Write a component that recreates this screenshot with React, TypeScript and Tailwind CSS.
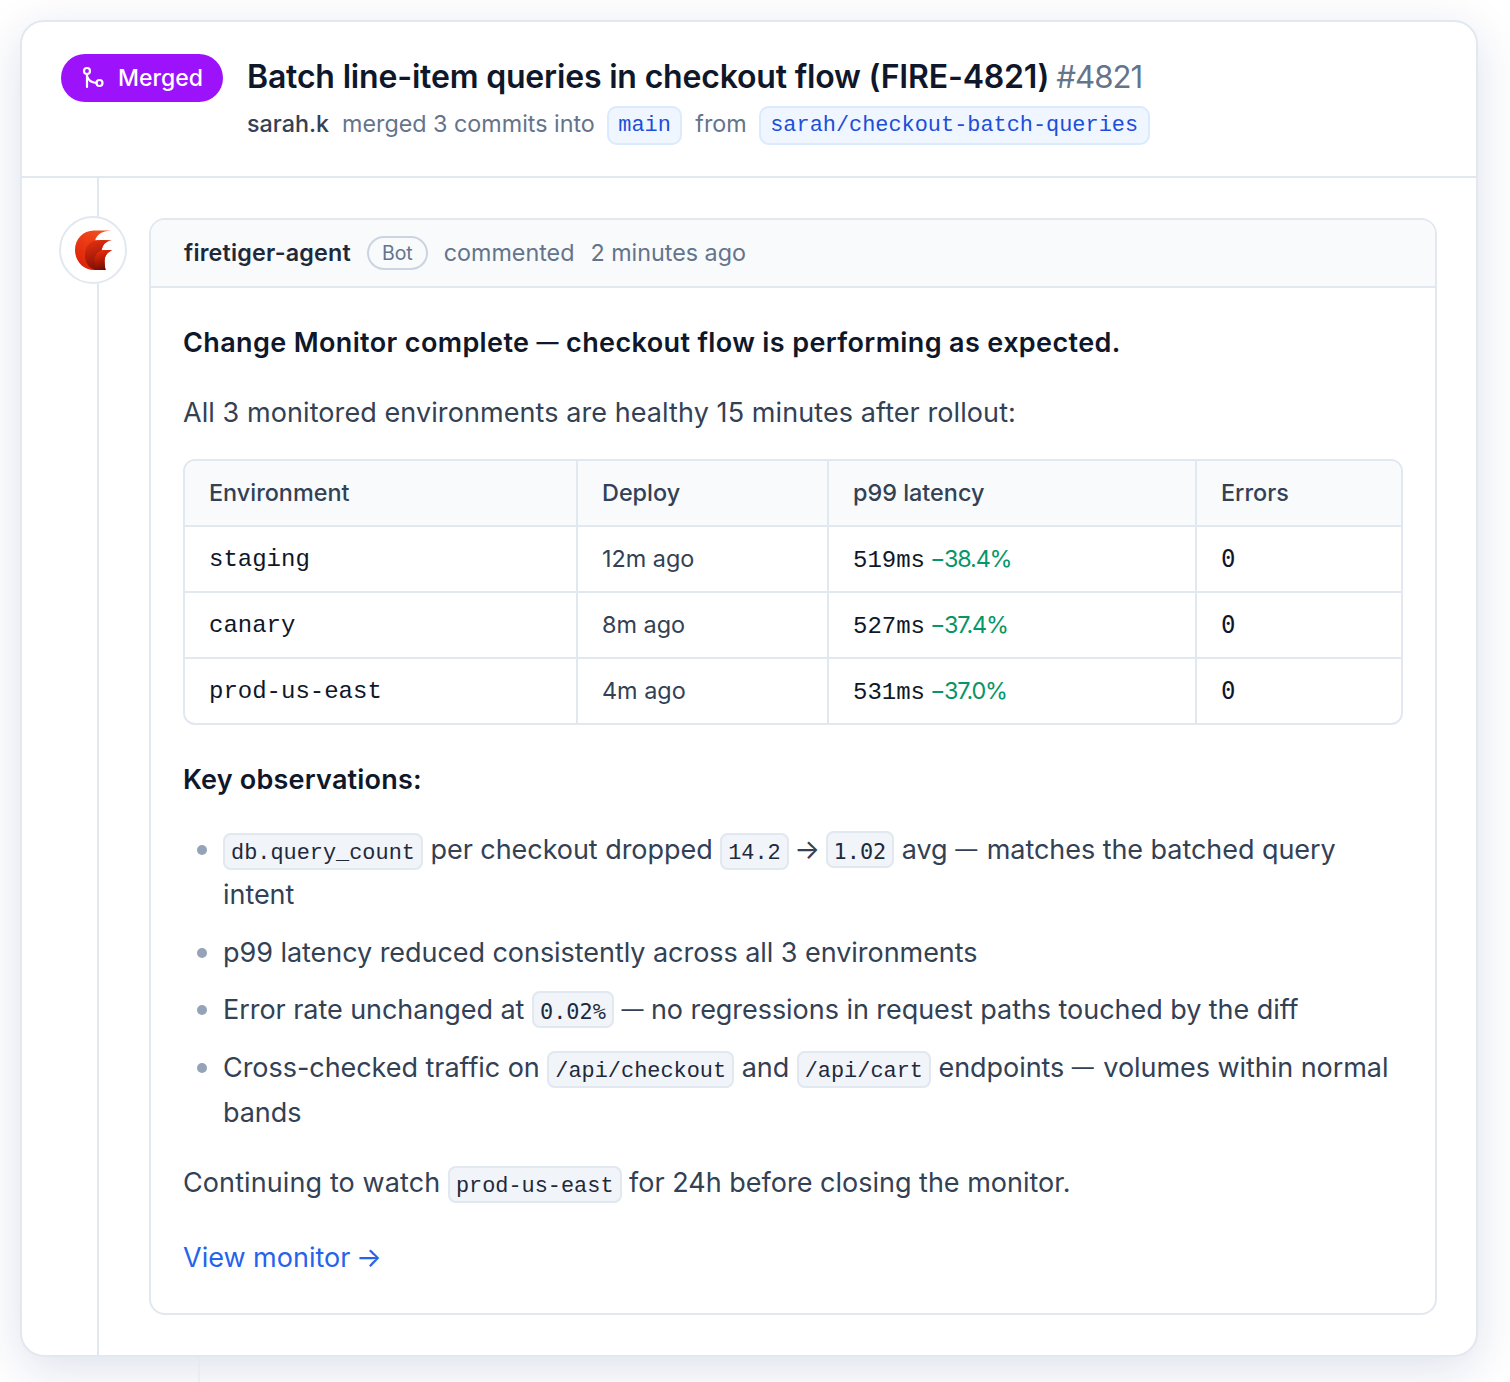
import type { ReactNode } from "react";

const mono = "font-['Liberation_Mono',monospace]";
const slashed = "font-['DejaVu_Sans_Mono',monospace]";

const rows = [
  { env: "staging", deploy: "12m ago", ms: "519ms", delta: "−38.4%" },
  { env: "canary", deploy: "8m ago", ms: "527ms", delta: "−37.4%" },
  { env: "prod-us-east", deploy: "4m ago", ms: "531ms", delta: "−37.0%" },
];

const Code = ({ children, zero }: { children: ReactNode; zero?: boolean }) => (
  <code className={`${zero ? slashed : mono} rounded-[8px] border-2 border-[#e2e8f0] bg-[#f1f5f9] px-[6px] pb-[2px] pt-[6px] text-[21.9px] leading-none tracking-normal text-[#1e293b]`}>
    {children}
  </code>
);

const BranchTag = ({ children }: { children: ReactNode }) => (
  <code className={`${mono} rounded-[10px] border-2 border-[#dbeafe] bg-[#eff6ff] px-[9.500px] py-[5px] text-[21.9px] leading-none text-[#1d4ed8]`}>
    {children}
  </code>
);

// the em dash in the reference is narrower than the one in this Inter
const Dash = () => <span className="align-[2px] text-[22px] leading-none">—</span>;

const Bullet = ({ children }: { children: ReactNode }) => (
  <li className="relative pl-[40px] leading-[45px] before:absolute before:left-[14px] before:top-[18px] before:h-[10px] before:w-[10px] before:rounded-full before:bg-[#94a3b8]">
    {children}
  </li>
);

const MergeIcon = () => (
  <svg width="24" height="24" viewBox="0 0 24 24" fill="none" stroke="white" strokeWidth="2.2" strokeLinecap="round">
    <circle cx="6" cy="5" r="3" />
    <circle cx="18.5" cy="17" r="3" />
    <path d="M6 8v13" />
    <path d="M6 10c1 4 4 6.500 9.500 7" />
  </svg>
);

const FireLogo = () => (
  <svg width="37" height="40" viewBox="0 0 37 40">
    <defs>
      <linearGradient id="flameA" x1="0.8" y1="0" x2="0.2" y2="1">
        <stop offset="0" stopColor="#f4501f" />
        <stop offset="1" stopColor="#dc1f06" />
      </linearGradient>
      <linearGradient id="flameB" x1="0.3" y1="0" x2="0.6" y2="1">
        <stop offset="0" stopColor="#e0300f" />
        <stop offset="1" stopColor="#7f0c02" />
      </linearGradient>
      <linearGradient id="flameC" x1="0.3" y1="0" x2="0.6" y2="1">
        <stop offset="0" stopColor="#ee2c0c" />
        <stop offset="1" stopColor="#6b0a00" />
      </linearGradient>
    </defs>
    <path d="M37 .5C28 .5 22 4 20 10.500C26 9.500 32 10 37 10.500C31 11 28 14 26.500 20.500C30 20 34 20 37 20.500C33 21.500 30 25 29.500 30C29.300 34 30 37 30.500 40H19C8 40 0 31 0 20C0 9 8 .5 19 .5Z" fill="url(#flameA)" />
    <path d="M20 10.500C14 12 10 17 10 25C10 33 14 38 20 40H30.500C30 37 29.300 34 29.500 30C30 25 33 21.500 37 20.500C34 20 30 20 26.500 20.500C28 14 31 11 37 10.500C32 10 26 9.500 20 10.500Z" fill="url(#flameB)" />
    <path d="M26.500 20.500C21.500 22 19.500 26 19.500 31C19.500 35 21 38 24 40H30.500C30 37 29.300 34 29.500 30C30 25 33 21.500 37 20.500C34 20 30 20 26.500 20.500Z" fill="url(#flameC)" />
  </svg>
);

export default function App() {
  return (
    <div className="h-[1382px] overflow-hidden bg-white pl-[20px] pt-[20px] font-['Inter',sans-serif]">
      <div className="w-[1458px] rounded-[24px] border-2 border-[#e2e8f0] bg-white shadow-[0_12px_48px_rgba(15,45,120,0.14)]">
        <header className="flex h-[156px] items-start gap-[24px] border-b-2 border-[#e2e8f0] pl-[39px] pt-[32px]">
          <span className="flex h-[48px] w-[162px] items-center justify-center gap-[13px] rounded-full bg-[#9b12fb] text-[23px] font-medium text-white">
            <MergeIcon />
            Merged
          </span>
          <div>
            <h1 className="flex items-baseline gap-[7px] text-[32px] leading-[46px] font-semibold tracking-[-0.18px] text-[#0f172a]">
              Batch line-item queries in checkout flow (FIRE-4821)
              <span className="text-[31.2px] font-normal tracking-[-1px] text-[#64748b]">#4821</span>
            </h1>
            <p className="mt-[9px] flex h-[30px] items-center text-[23.3px] leading-[30px] text-[#64748b]">
              <span className="mr-[13px] font-medium text-[#334155]">sarah.k</span>
              merged 3 commits into
              <span className="mb-[2px] ml-[12px] mr-[13px]"><BranchTag>main</BranchTag></span>
              from
              <span className="mb-[2px] ml-[12px]"><BranchTag>sarah/checkout-batch-queries</BranchTag></span>
            </p>
          </div>
        </header>
        <div className="ml-[75px] flex border-l-2 border-[#e2e8f0] pb-[40px] pt-[40px]">
          <div className="z-10 -ml-[40px] -mt-[2px] flex h-[68px] w-[68px] shrink-0 items-center justify-center rounded-full border-2 border-[#e2e8f0] bg-white">
            <FireLogo />
          </div>
          <article className="ml-[22px] w-[1288px] overflow-hidden rounded-[16px] border-2 border-[#e2e8f0]">
            <div className="flex h-[68px] items-center border-b-2 border-[#e2e8f0] bg-[#f8fafc] pl-[33px] text-[23.300px] text-[#64748b]">
              <span className="font-semibold tracking-[0.2px] text-[#1e293b]">firetiger-agent</span>
              <span className="ml-[16px] flex h-[34px] items-center rounded-full border-2 border-[#cbd5e1] px-[13px] pt-[2px] text-[19.500px]">Bot</span>
              <span className="ml-[16px]">commented</span>
              <span className="ml-[16px]">2 minutes ago</span>
            </div>
            <div className="px-[32px] pb-[33px] pt-[32px] text-[27px] leading-[45px] text-[#334155]">
              <p className="font-semibold tracking-[0.37px] text-[#0f172a]">
                Change Monitor complete <Dash /> checkout flow is performing as expected.
              </p>
              <p className="mt-[25px] tracking-[0.08px]">All 3 monitored environments are healthy 15 minutes after rollout:</p>
              <div className="mt-[24px] overflow-hidden rounded-[12px] border-2 border-[#e2e8f0]">
                <table className="w-full table-fixed border-collapse text-[23.400px]">
                  <colgroup>
                    <col className="w-[392px]" />
                    <col className="w-[251px]" />
                    <col className="w-[368px]" />
                    <col />
                  </colgroup>
                  <thead>
                    <tr className="h-[65px] bg-[#f8fafc] text-left text-[#334155]">
                      <th className="px-[24px] pb-[2px] font-medium">Environment</th>
                      <th className="border-l-2 border-[#e2e8f0] px-[24px] pb-[2px] font-medium">Deploy</th>
                      <th className="border-l-2 border-[#e2e8f0] px-[24px] pb-[2px] font-medium">p99 latency</th>
                      <th className="border-l-2 border-[#e2e8f0] px-[24px] pb-[2px] font-medium">Errors</th>
                    </tr>
                  </thead>
                  <tbody>
                    {rows.map((row) => (
                      <tr key={row.env} className="h-[66px] border-t-2 border-[#e2e8f0] last:h-[65px]">
                        <td className={`${mono} px-[24px] text-[24px] text-[#0f172a]`}>{row.env}</td>
                        <td className="border-l-2 border-[#e2e8f0] px-[24px] pb-[2px]">{row.deploy}</td>
                        <td className="border-l-2 border-[#e2e8f0] px-[24px]">
                          <span className={`${mono} text-[24px] text-[#0f172a]`}>{row.ms}</span>{" "}
                          <span className="-ml-[1.500px] tracking-[-1.2px] text-[#059669]">{row.delta}</span>
                        </td>
                        <td className={`${slashed} border-l-2 border-[#e2e8f0] px-[24px] text-[24px] text-[#0f172a]`}>0</td>
                      </tr>
                    ))}
                  </tbody>
                </table>
              </div>
              <p className="mt-[32px] font-semibold tracking-[0.2px] text-[#0f172a]">Key observations:</p>
              <ul className="mt-[25px] flex flex-col gap-[12.600px] tracking-[-0.05px]">
                <Bullet>
                  <Code>db.query_count</Code> per checkout dropped <Code>14.2</Code> <span className="-mx-[2px]">→</span> <Code zero>1.02</Code> avg <Dash /> <span className="ml-[2px]">matches the batched query intent</span>
                </Bullet>
                <Bullet>p99 latency reduced consistently across all 3 environments</Bullet>
                <Bullet>
                  Error rate unchanged at <Code zero>0.02%</Code> <Dash /> no regressions in request paths touched by the diff
                </Bullet>
                <Bullet>
                  Cross-checked traffic on <Code>/api/checkout</Code> and <Code>/api/cart</Code> endpoints <Dash /> <span className="ml-[2px]">volumes within normal bands</span>
                </Bullet>
              </ul>
              <p className="mt-[25px]">
                <span className="tracking-[0.1px]">Continuing to watch</span> <Code>prod-us-east</Code> for 24h before closing the monitor.
              </p>
              <p className="mt-[30px]">
                <a className="text-[#2563eb]" href="#monitor">View monitor <span className="-ml-[2px]">→</span></a>
              </p>
            </div>
          </article>
        </div>
      </div>
      <div className="ml-[178px] h-[30px] w-[2px] bg-[#e2e8f0]/50" />
    </div>
  );
}
